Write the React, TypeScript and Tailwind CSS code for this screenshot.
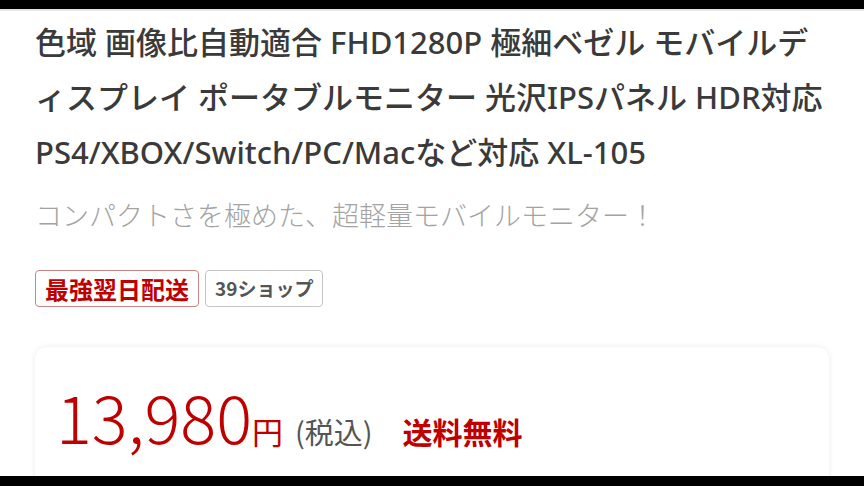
export default function App() {
  return (
    <div
      className="flex h-[486px] w-[864px] flex-col overflow-hidden bg-white"
      style={{ fontFamily: '"Noto Sans", "Noto Sans CJK JP", sans-serif' }}
    >
      <div className="h-[9px] shrink-0 bg-black" />
      <div className="h-[2px] shrink-0 bg-[#e6e6e6]" />

      <main className="min-h-0 flex-1 overflow-hidden px-[35px]">
        <h1 className="pt-[4px] text-[31px] font-medium leading-[55px] text-[#3a3a3a]">
          色域 画像比自動適合 FHD1280P 極細ベゼル モバイルデ
          <br />
          ィスプレイ ポータブルモニター 光沢IPSパネル HDR対応
          <br />
          PS4/XBOX/Switch/PC/Macなど対応 XL-105
        </h1>

        <p
          className="mt-[15px] text-[27px] font-light leading-[40px] text-[#a3a3a3]"
          style={{ fontFamily: '"Noto Sans CJK JP", sans-serif' }}
        >
          コンパクトさを極めた、超軽量モバイルモニター！
        </p>

        <div
          className="mt-[35px] flex gap-[6px]"
          style={{ fontFamily: '"Noto Sans CJK JP", sans-serif' }}
        >
          <span className="flex h-[37px] items-center rounded-[4px] border border-[#c98585] px-[9px] text-[24px] font-bold text-[#bf0000]">
            最強翌日配送
          </span>
          <span className="flex h-[37px] items-center rounded-[4px] border border-[#c4c4c4] px-[9px] text-[19px] font-bold text-[#555]">
            39ショップ
          </span>
        </div>

        <section
          className="mt-[40px] h-[200px] rounded-[12px] bg-white px-[21px] pt-[34px] shadow-[0_0_6px_rgba(0,0,0,0.08)]"
          style={{ fontFamily: '"Noto Sans CJK JP", sans-serif' }}
        >
          <div className="flex items-baseline">
            <span className="text-[67px] font-light leading-none text-[#bf0000]">13,980</span>
            <span className="text-[31px] text-[#bf0000]">円</span>
            <span className="ml-[12px] text-[29px] text-[#555]">(税込)</span>
            <span className="ml-[30px] text-[30px] font-bold text-[#bf0000]">送料無料</span>
          </div>
        </section>
      </main>

      <div className="h-[10px] shrink-0 bg-black" />
    </div>
  );
}
